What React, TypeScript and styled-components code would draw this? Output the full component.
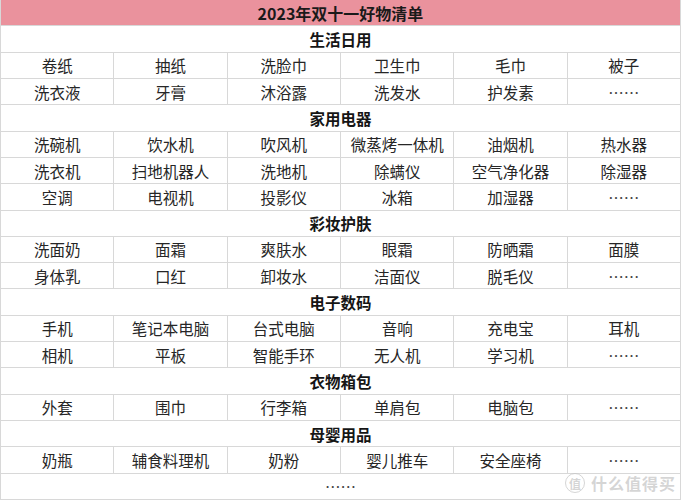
import React from "react";
import styled, { createGlobalStyle } from "styled-components";

const Global = createGlobalStyle`
  html, body { margin: 0; padding: 0; background: #ffffff; }
  body { font-family: "Noto Sans CJK SC", "Noto Sans", sans-serif; }
`;

const Table = styled.div`
  position: relative;
  width: 681px;
  height: 500px;
  box-sizing: border-box;
  display: grid;
  grid-template-columns: repeat(6, 1fr);
  grid-template-rows: repeat(19, 1fr);
  gap: 1px;
  background: #d8d8d8;
  border: 1px solid #d8d8d8;
  border-top: none;
  overflow: hidden;
`;

const Title = styled.div`
  grid-column: 1 / -1;
  background: #ea929d;
  margin: 0 -1px;
  display: flex;
  align-items: center;
  justify-content: center;
  font-size: 16px;
  font-weight: 700;
  color: #1a1a1a;
`;

const Category = styled.div`
  grid-column: 1 / -1;
  background: #ffffff;
  display: flex;
  align-items: center;
  justify-content: center;
  font-size: 15.5px;
  font-weight: 700;
  color: #151515;
`;

const Cell = styled.div<{ $dots?: boolean }>`
  background: #ffffff;
  display: flex;
  align-items: center;
  justify-content: center;
  font-size: 15.5px;
  color: ${(p) => (p.$dots ? "#444" : "#262626")};
  white-space: nowrap;
`;

const LastRow = styled.div`
  grid-column: 1 / -1;
  background: #ffffff;
  display: flex;
  align-items: center;
  justify-content: center;
  font-size: 15.5px;
  color: #444;
`;

const Watermark = styled.div`
  position: absolute;
  right: 4px;
  bottom: 4px;
  display: flex;
  align-items: center;
  gap: 6px;
  color: rgba(195, 195, 195, 0.7);
  font-size: 16px;
  font-weight: 700;
  letter-spacing: 1px;
  pointer-events: none;
`;

const Badge = styled.span`
  width: 18px;
  height: 18px;
  border-radius: 50%;
  border: 1.5px solid rgba(195, 195, 195, 0.7);
  display: inline-flex;
  align-items: center;
  justify-content: center;
  font-size: 12px;
  letter-spacing: 0;
`;

type Section = { name: string; rows: string[][] };

const sections: Section[] = [
  {
    name: "生活日用",
    rows: [
      ["卷纸", "抽纸", "洗脸巾", "卫生巾", "毛巾", "被子"],
      ["洗衣液", "牙膏", "沐浴露", "洗发水", "护发素", "……"],
    ],
  },
  {
    name: "家用电器",
    rows: [
      ["洗碗机", "饮水机", "吹风机", "微蒸烤一体机", "油烟机", "热水器"],
      ["洗衣机", "扫地机器人", "洗地机", "除螨仪", "空气净化器", "除湿器"],
      ["空调", "电视机", "投影仪", "冰箱", "加湿器", "……"],
    ],
  },
  {
    name: "彩妆护肤",
    rows: [
      ["洗面奶", "面霜", "爽肤水", "眼霜", "防晒霜", "面膜"],
      ["身体乳", "口红", "卸妆水", "洁面仪", "脱毛仪", "……"],
    ],
  },
  {
    name: "电子数码",
    rows: [
      ["手机", "笔记本电脑", "台式电脑", "音响", "充电宝", "耳机"],
      ["相机", "平板", "智能手环", "无人机", "学习机", "……"],
    ],
  },
  {
    name: "衣物箱包",
    rows: [["外套", "围巾", "行李箱", "单肩包", "电脑包", "……"]],
  },
  {
    name: "母婴用品",
    rows: [["奶瓶", "辅食料理机", "奶粉", "婴儿推车", "安全座椅", "……"]],
  },
];

export default function App() {
  return (
    <>
      <Global />
      <Table>
        <Title>2023年双十一好物清单</Title>
        {sections.map((s) => (
          <React.Fragment key={s.name}>
            <Category>{s.name}</Category>
            {s.rows.flatMap((r, ri) =>
              r.map((c, ci) => (
                <Cell key={`${s.name}-${ri}-${ci}`} $dots={c === "……"}>
                  {c}
                </Cell>
              ))
            )}
          </React.Fragment>
        ))}
        <LastRow>……</LastRow>
        <Watermark>
          <Badge>值</Badge>
          什么值得买
        </Watermark>
      </Table>
    </>
  );
}
